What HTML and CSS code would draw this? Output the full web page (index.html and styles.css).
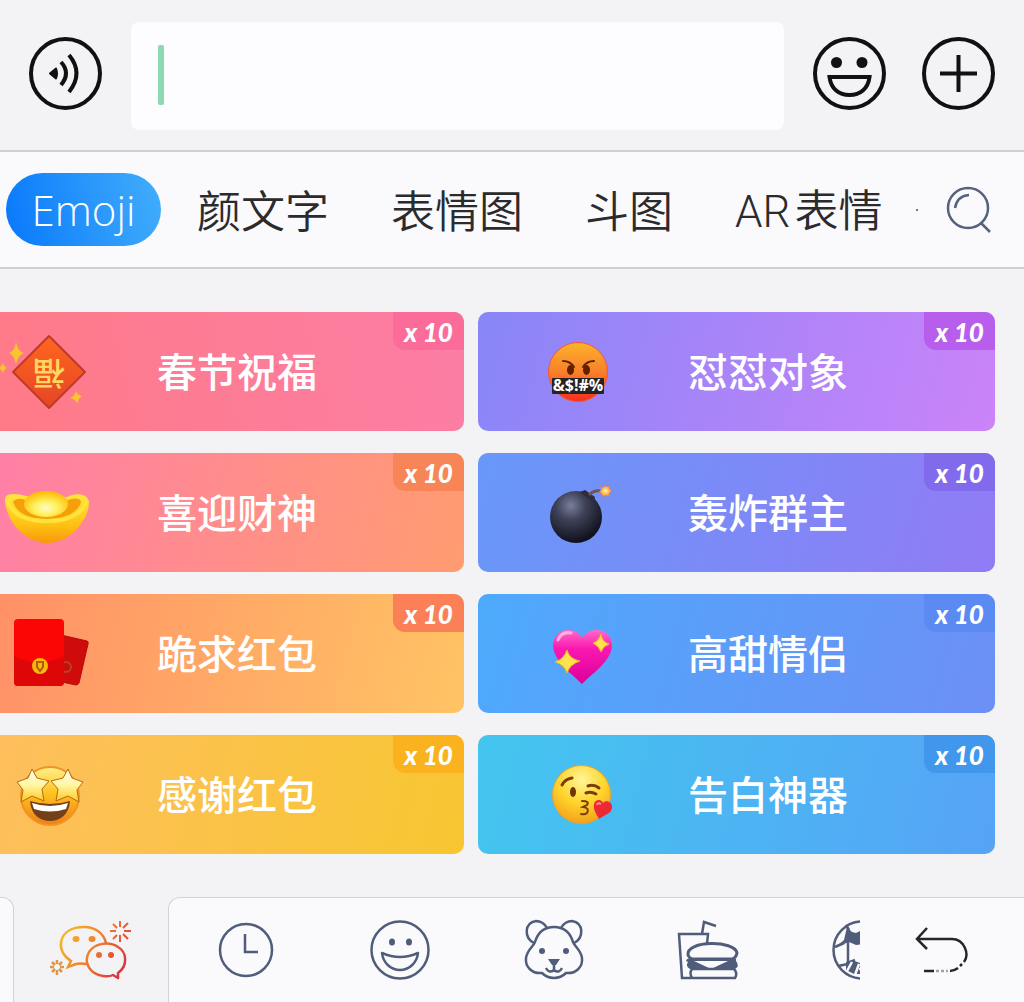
FILE: index.html
```html
<!DOCTYPE html>
<html lang="zh-CN">
<head>
    <meta charset="UTF-8">
    <meta name="viewport" content="width=device-width, initial-scale=1.0">
    <title>Emoji</title>
    <link rel="stylesheet" href="styles.css">
</head>
<body>
    <div class="keyboard">
        <header class="input-bar">
            <button class="round-btn" aria-label="语音">
                <svg viewBox="0 0 73 73" fill="none" stroke="#111" stroke-width="4">
                    <circle cx="36.5" cy="36.5" r="34.5"/>
                    <path d="M21 36.5L27 31.5Q29 36.500 27 41.5Z" fill="#111" stroke-width="2" stroke-linejoin="round"/>
                    <path d="M32 25Q42 36 32 48M40 18Q55 36 40 55"/>
                </svg>
            </button>
            <div class="field">
                <input type="text" class="message" id="message" aria-label="消息">
                <span class="caret"></span>
            </div>
            <div class="actions">
                <button class="round-btn" aria-label="表情">
                    <svg viewBox="0 0 73 73" fill="none" stroke="#111" stroke-width="4">
                        <circle cx="36.5" cy="36.5" r="34.5"/>
                        <circle cx="23.5" cy="25.5" r="5.5" fill="#111" stroke="none"/>
                        <circle cx="49" cy="25.5" r="5.5" fill="#111" stroke="none"/>
                        <path d="M16.5 40H56.5C55 52 47 58 36.5 58S18 52 16.5 40Z"/>
                    </svg>
                </button>
                <button class="round-btn" aria-label="更多">
                    <svg viewBox="0 0 73 73" fill="none" stroke="#111" stroke-width="4">
                        <circle cx="36.5" cy="36.5" r="34.5"/>
                        <path d="M36.5 18V55M18 36.5H55"/>
                    </svg>
                </button>
            </div>
        </header>

        <nav class="tabs">
            <button class="tab active">Emoji</button>
            <button class="tab">颜文字</button>
            <button class="tab">表情图</button>
            <button class="tab">斗图</button>
            <button class="tab"><span class="latin">AR</span>表情</button>
            <span class="more-dot"></span>
            <button class="search" aria-label="搜索">
                <svg viewBox="0 0 46 46" fill="none" stroke="#54617f" stroke-width="2.5">
                    <circle cx="22" cy="21" r="20"/>
                    <path d="M9 21Q11 9 23 8M35 36L44 45"/>
                </svg>
            </button>
        </nav>

        <main class="cards">
            <button class="card spring">
                <svg class="emoji" viewBox="0 0 96 84">
                    <defs>
                        <linearGradient id="fu" x1="0" y1="0" x2="0" y2="1"><stop offset="0" stop-color="#ff661e"/><stop offset="1" stop-color="#e54526"/></linearGradient>
                    </defs>
                    <path d="M48 6L84 42L48 78L12 42Z" fill="url(#fu)" stroke="#c03a2c" stroke-width="2" stroke-linejoin="round"/>
                    <text class="fu" x="48" y="54" text-anchor="middle" transform="rotate(180 48 43)">福</text>
                    <path d="M15 12Q17 22 23 23Q17 25 15 34Q13 25 8 23Q13 22 15 12ZM2 33Q3 37 6 38Q3 39 2 43Q0 39-3 38Q0 37 2 33ZM75 61Q76 65 81 66Q78 68 76 73Q74 69 69 68Q74 66 75 61Z" fill="#f8c62c"/>
                </svg>
                <span class="name">春节祝福</span>
                <span class="count">x 10</span>
            </button>
            <button class="card scold">
                <svg class="emoji" viewBox="0 0 96 84">
                    <defs>
                        <linearGradient id="angry" x1="0" y1="0" x2="0" y2="1"><stop offset="0" stop-color="#fdb22b"/><stop offset=".5" stop-color="#f8802a"/><stop offset="1" stop-color="#f42e20"/></linearGradient>
                    </defs>
                    <circle cx="46" cy="42" r="29.5" fill="url(#angry)" stroke="#f3592d"/>
                    <ellipse cx="38.5" cy="40" rx="3.5" ry="5" fill="#652000"/>
                    <ellipse cx="54.5" cy="40" rx="3.5" ry="5" fill="#652000"/>
                    <path d="M31 31Q38 31 42 37M62 31Q55 31 51 37" fill="none" stroke="#652000" stroke-width="2" stroke-linecap="round"/>
                    <rect x="20" y="48" width="52" height="16" rx="1" fill="#242222"/>
                    <text class="swear" x="46" y="61" text-anchor="middle">&amp;$!#%</text>
                </svg>
                <span class="name">怼怼对象</span>
                <span class="count">x 10</span>
            </button>
            <button class="card wealth">
                <svg class="emoji" viewBox="0 0 96 84">
                    <defs>
                        <linearGradient id="gold" x1="0" y1="0" x2="0" y2="1"><stop offset="0" stop-color="#ffe640"/><stop offset=".6" stop-color="#ffc414"/><stop offset="1" stop-color="#f59a08"/></linearGradient>
                        <radialGradient id="dome" cx=".5" cy=".65" r=".6"><stop offset="0" stop-color="#fffbc8"/><stop offset=".45" stop-color="#fff05c"/><stop offset="1" stop-color="#ffbe0b"/></radialGradient>
                    </defs>
                    <path d="M4 28C5 21 17 23 25 25L66 26C76 21 87 23 88 31C88 46 76 61 63 68Q45 76 30 68C14 61 4 42 4 28Z" fill="url(#gold)"/>
                    <path d="M12 30C19 26 22 28 26 30H65C73 26 80 27 80 31C77 41 65 48 46 48C28 48 15 42 12 30Z" fill="#f5a00a"/>
                    <ellipse cx="45" cy="33" rx="22" ry="13" fill="url(#dome)"/>
                    <path d="M6 29C12 45 26 50 46 50C66 50 80 44 86 30" fill="none" stroke="#ffe43c" stroke-width="4"/>
                </svg>
                <span class="name">喜迎财神</span>
                <span class="count">x 10</span>
            </button>
            <button class="card bomb">
                <svg class="emoji" viewBox="0 0 96 84">
                    <defs>
                        <radialGradient id="ball" cx=".4" cy=".28" r=".7"><stop offset="0" stop-color="#78809a"/><stop offset=".4" stop-color="#3e4257"/><stop offset="1" stop-color="#11121f"/></radialGradient>
                        <radialGradient id="spark"><stop offset="0" stop-color="#fff8a0"/><stop offset=".5" stop-color="#ffb64c"/><stop offset="1" stop-color="#f5533a"/></radialGradient>
                    </defs>
                    <circle cx="44" cy="46" r="26" fill="url(#ball)"/>
                    <path d="M48 21L53 19L63 26L62 32Z" fill="#2e2d3a"/>
                    <path d="M57 24Q62 19 68 20" fill="none" stroke="#6f5552" stroke-width="3"/>
                    <path d="M72 13L74 16L78 14L77 18L81 20L77 22L78 26L74 24L71 27L70 23L66 21L70 19L68 15L72 17Z" fill="url(#spark)"/>
                </svg>
                <span class="name">轰炸群主</span>
                <span class="count">x 10</span>
            </button>
            <button class="card packet">
                <svg class="emoji" viewBox="0 0 96 84">
                    <path d="M60 23L86 29Q88 30 87 32L78 71Q77 73 75 73L56 69Z" fill="#cf0b0b" stroke="#b80c0c"/>
                    <circle cx="65" cy="55" r="5" fill="none" stroke="#b6461b" stroke-width="2"/>
                    <rect x="13" y="7" width="50" height="67" rx="4" fill="#fb0505"/>
                    <path d="M13 44Q38 57 63 44V70Q63 74 59 74H17Q13 74 13 70Z" fill="#dd0707"/>
                    <circle cx="39" cy="54" r="8" fill="#f9b80c"/>
                    <path d="M36 50H42V55L39 59L36 55Z" fill="none" stroke="#b55b08" stroke-width="2"/>
                </svg>
                <span class="name">跪求红包</span>
                <span class="count">x 10</span>
            </button>
            <button class="card couple">
                <svg class="emoji" viewBox="0 0 96 84">
                    <defs>
                        <linearGradient id="love" x1="0" y1="0" x2="0" y2="1"><stop offset="0" stop-color="#ff6ac8"/><stop offset=".35" stop-color="#fb18b1"/><stop offset="1" stop-color="#d80099"/></linearGradient>
                    </defs>
                    <path d="M50 72C38 60 22 49 21 34C21 16 43 13 50 26C58 13 80 16 80 34C79 49 62 60 50 72Z" fill="url(#love)"/>
                    <path d="M26 28Q30 19 39 21" fill="none" stroke="#ffb0e2" stroke-width="3" stroke-linecap="round"/>
                    <path d="M35 38Q37 47 48 49Q38 52 35 61Q33 53 23 50Q32 47 35 38ZM69 22Q70 30 77 32Q71 34 69 40Q67 34 61 31Q67 29 69 22Z" fill="#ffe34c" stroke="#f5b41f"/>
                </svg>
                <span class="name">高甜情侣</span>
                <span class="count">x 10</span>
            </button>
            <button class="card thanks">
                <svg class="emoji" viewBox="0 0 96 84">
                    <defs>
                        <linearGradient id="face" x1="0" y1="0" x2="0" y2="1"><stop offset="0" stop-color="#fff18a"/><stop offset=".45" stop-color="#ffc320"/><stop offset="1" stop-color="#f07d15"/></linearGradient>
                        <linearGradient id="star" x1="0" y1="0" x2="0" y2="1"><stop offset="0" stop-color="#fffef0"/><stop offset=".5" stop-color="#fff6a0"/><stop offset="1" stop-color="#ffc61d"/></linearGradient>
                    </defs>
                    <circle cx="49" cy="43" r="29" fill="url(#face)" stroke="#ef9425" stroke-width="2"/>
                    <path d="M29 48Q49 54 69 48C68 62 59 68 49 68S30 62 29 48Z" fill="#744018"/>
                    <path d="M31 50Q49 56 67 50L65 56Q49 61 33 56Z" fill="#fff"/>
                    <path d="M31 16L36 25L48 28L41 36L43 48L31 43L20 49L22 37L16 29L27 25ZM67 16L71 25L82 29L76 37L78 49L67 43L55 48L57 36L50 28L62 25Z" fill="url(#star)" stroke="#b46a12" stroke-linejoin="round"/>
                </svg>
                <span class="name">感谢红包</span>
                <span class="count">x 10</span>
            </button>
            <button class="card confess">
                <svg class="emoji" viewBox="0 0 96 84">
                    <defs>
                        <radialGradient id="kiss" cx=".5" cy=".25" r=".8"><stop offset="0" stop-color="#fff59a"/><stop offset=".5" stop-color="#ffd52c"/><stop offset="1" stop-color="#f29a18"/></radialGradient>
                    </defs>
                    <circle cx="49.5" cy="41.5" r="29" fill="url(#kiss)" stroke="#eea32b"/>
                    <ellipse cx="41" cy="39" rx="3" ry="5" fill="#6f3708"/>
                    <path d="M30 32Q33 26 40 25M56 33Q62 31 67 35M54 40Q59 38 64 41" fill="none" stroke="#7a3f08" stroke-width="3" stroke-linecap="round"/>
                    <path d="M50 48Q58 48 55 52L51 54Q58 55 55 60Q53 62 49 61" fill="none" stroke="#7a3f08" stroke-width="2" stroke-linecap="round"/>
                    <path d="M67 66C64 60 61 57 62 51C64 45 70 47 71 50C74 46 81 49 80 55C79 61 72 62 67 66Z" fill="#ed2933"/>
                    <path d="M65 52Q66 49 69 51" fill="none" stroke="#ff8d90" stroke-width="2"/>
                </svg>
                <span class="name">告白神器</span>
                <span class="count">x 10</span>
            </button>
        </main>

        <footer class="categories">
            <div class="edge"></div>
            <button class="category current" aria-label="热门">
                <svg class="chat-icon" viewBox="0 0 80 60">
                    <defs>
                        <linearGradient id="warm" gradientUnits="userSpaceOnUse" x1="8" y1="10" x2="72" y2="50"><stop offset="0" stop-color="#f6c224"/><stop offset=".5" stop-color="#ef812b"/><stop offset="1" stop-color="#dd3340"/></linearGradient>
                    </defs>
                    <g stroke="url(#warm)">
                        <path d="M36 44Q28 43 25 44L17 47L20 41C11 35 9 29 10 22C12 12 21 7 33 7C45 7 53 14 55 23"/>
                        <path d="M67 53C77 46 76 32 67 27C58 21 44 23 38 32C32 43 39 54 52 56Q58 57 62 55L67 58Z" stroke-linejoin="round"/>
                        <path d="M69 1V7M69 15V22M59 11H65M73 11H80M62 4L66 8M72 14L77 19M62 19L66 15M72 8L77 3" stroke-width="2"/>
                    </g>
                    <path d="M6 40V44M6 50V55M-1 47H3M9 47H13M1 42L4 45M8 49L11 52M1 52L4 49M8 45L11 42" stroke="#dc9748"/>
                    <g fill="url(#warm)" stroke="none"><ellipse cx="25" cy="19" rx="3.5" ry="3"/><ellipse cx="41" cy="19" rx="3.5" ry="3"/><circle cx="48" cy="35" r="3"/><circle cx="60" cy="35" r="3"/></g>
                </svg>
            </button>
            <div class="panel">
                <div class="category-list">
                    <button class="category" aria-label="最近">
                        <svg viewBox="0 0 60 60"><circle cx="30" cy="30" r="26"/><path d="M29 14V32H42"/></svg>
                    </button>
                    <button class="category" aria-label="笑脸">
                        <svg viewBox="0 0 60 60">
                            <circle cx="30" cy="30" r="28.5"/>
                            <g class="solid"><ellipse cx="22" cy="22" rx="3" ry="3.5"/><ellipse cx="39" cy="22" rx="3" ry="3.5"/></g>
                            <path d="M12 33Q30 41 48 33C47 43 39 50 30 50S13 43 12 33Z" stroke-linejoin="round"/>
                        </svg>
                    </button>
                    <button class="category" aria-label="动物">
                        <svg viewBox="0 0 60 60">
                            <path d="M18 53C8 54 1 47 2 38C3 30 9 27 11 22C14 12 21 7 30 7S46 12 49 22C51 27 57 30 58 38C59 47 52 54 42 53Q37 58 30 58T18 53Z"/>
                            <path d="M10 23C0 18 0 3 12 1Q19 1 23 8M50 23C60 18 60 3 48 1Q41 1 37 8"/>
                            <g class="solid"><circle cx="18" cy="31" r="3"/><circle cx="42" cy="31" r="3"/><path d="M24 39H36L32 45H28Z"/></g>
                            <path d="M30 43V50M22 48Q25 54 30 50Q35 54 38 48"/>
                        </svg>
                    </button>
                    <button class="category" aria-label="食物">
                        <svg viewBox="0 0 60 60">
                            <path d="M13 58H4L1 14H30L29 24M24 14L26 2L38 6"/>
                            <path d="M10 35C8 20 57 20 59 33Q58 38 54 39H14Q11 38 10 35Z" stroke-width="3"/>
                            <path class="solid" d="M9 39H58V41Q62 46 57 49H12Q7 46 10 42L8 41Z"/>
                            <path d="M16 41H50L33 49Z" fill="#faf9fc" stroke="none"/>
                            <path d="M14 49H56Q60 53 57 58H14Q11 53 14 49Z"/>
                        </svg>
                    </button>
                    <button class="category" aria-label="运动">
                        <svg viewBox="0 0 60 60">
                            <circle cx="30" cy="30" r="28.5"/>
                            <path d="M3 27L12 23M17 10L14 5M16 22V44L6 46M16 43L23 40M52 24L46 16M44 43V28"/>
                            <path class="solid" d="M15 7L20 12L24 13L30 10L28 17L31 24L24 25L17 22L4 27L12 20ZM14 42L20 40L31 44V54L22 54L14 50Z"/>
                            <path d="M20 42L15 51M27 44L23 55M27 49H32" stroke="#faf9fc"/>
                        </svg>
                    </button>
                </div>
                <button class="undo" aria-label="撤销">
                    <svg viewBox="0 0 54 48" fill="none" stroke="#262626" stroke-width="2.5">
                        <path d="M12 2L2 13L12 23M2 13H37C49 13 55 28 49 36M47 38L45 40M43 42Q39 45 35 45M9 45H19"/>
                        <path d="M21 45H33" stroke="#a2a2a5" stroke-dasharray="3 2"/>
                    </svg>
                </button>
            </div>
        </footer>
    </div>
</body>
</html>
```
FILE: styles.css
```css
* {
    box-sizing: border-box;
}

body {
    margin: 0;
    background: #f3f2f5;
    color: #2b2b2d;
    font-family: "Noto Sans CJK SC", sans-serif;
}

button {
    border: none;
    background: none;
    padding: 0;
    color: inherit;
    font: inherit;
    cursor: pointer;
}

svg {
    display: block;
    overflow: visible;
}

.keyboard {
    display: flex;
    flex-direction: column;
    min-height: 100vh;
    overflow: hidden;
}

/* message input */
.input-bar {
    display: flex;
    align-items: flex-start;
    gap: 29px;
    padding: 22px 29px 20px;
    border-bottom: 2px solid #cfced1;
}

.round-btn {
    width: 73px;
    height: 73px;
    flex: none;
    margin-top: 15px;
}

.field {
    position: relative;
    flex: 1;
}

.message {
    display: block;
    width: 100%;
    height: 108px;
    border: none;
    border-radius: 8px;
    background: #fdfcfe;
    padding: 0 28px;
    font-size: 40px;
    outline: none;
}

.caret {
    position: absolute;
    left: 27px;
    top: 23px;
    width: 6px;
    height: 60px;
    border-radius: 2px;
    background: #8fd9b2;
}

.actions {
    display: flex;
    gap: 36px;
}

/* tabs */
.tabs {
    display: flex;
    align-items: center;
    height: 117px;
    padding: 0 32px 0 6px;
    background: #faf9fc;
    border-bottom: 2px solid #d0cfd2;
}

.tab {
    height: 73px;
    padding: 0 31px;
    font-size: 44px;
    font-weight: 350;
    line-height: 71px;
    white-space: nowrap;
}

.tab.active {
    width: 155px;
    margin-right: 5px;
    padding: 0;
    border-radius: 37px;
    background: linear-gradient(75deg, #0878fb, #42aefc);
    color: #fff;
    font-family: "Open Sans", "Noto Sans", sans-serif;
    font-size: 42px;
    line-height: 73px;
}

.latin {
    margin-right: 4px;
    font-family: Roboto, sans-serif;
}

.more-dot {
    width: 2px;
    height: 2px;
    margin-left: 3px;
    background: #77777c;
}

.search {
    width: 46px;
    height: 46px;
    margin-left: auto;
}

/* cards, the left column runs off the edge */
.cards {
    display: grid;
    grid-template-columns: 1fr 1fr;
    gap: 22px 14px;
    margin-left: -53px;
    padding: 43px 29px 43px 0;
}

.card {
    position: relative;
    display: flex;
    align-items: center;
    gap: 60px;
    height: 119px;
    padding-left: 54px;
    border-radius: 10px;
    overflow: hidden;
    color: #fff;
}

.emoji {
    width: 96px;
    height: 84px;
}

.name {
    padding-bottom: 4px;
    font-size: 40px;
    font-weight: 500;
    line-height: 60px;
    white-space: nowrap;
}

.count {
    position: absolute;
    top: 0;
    right: 0;
    width: 71px;
    height: 38px;
    border-bottom-left-radius: 12px;
    font-family: Lato, sans-serif;
    font-size: 26px;
    font-style: italic;
    font-weight: 900;
    line-height: 40px;
}

.fu {
    fill: #ffd75e;
    font-size: 32px;
    font-weight: 500;
}

.swear {
    fill: #fff;
    font-family: "Open Sans", sans-serif;
    font-size: 16px;
    font-weight: 700;
}

.spring { background: linear-gradient(75deg, #ff7a84, #fc7ea5); }
.spring .count { background: #fb6c9a; }
.scold { background: linear-gradient(105deg, #8886f8, #cb83f9); }
.scold .count { background: #b75fec; }
.wealth { background: linear-gradient(105deg, #ff7cac, #ff9c70); }
.wealth .count { background: #f88557; }
.bomb { background: linear-gradient(105deg, #6898fa, #917bf5); }
.bomb .count { background: #826aed; }
.packet { background: linear-gradient(105deg, #ff8b68, #ffc464); }
.packet .count { background: #fb8058; }
.couple { background: linear-gradient(105deg, #4daafc, #6d8ff6); }
.couple .count { background: #5b8af3; }
.thanks { background: linear-gradient(105deg, #ffbe62, #f7c631); }
.thanks .count { background: #fab31e; }
.confess { background: linear-gradient(105deg, #43c6ef, #56a3f6); }
.confess .count { background: #4097eb; }

/* bottom categories */
.categories {
    display: flex;
    flex: 1;
    min-height: 105px;
}

.edge {
    width: 14px;
    border: solid #d2d1d5;
    border-width: 1px 1px 0 0;
    border-top-right-radius: 12px;
    background: #faf9fc;
}

.category {
    width: 154px;
    flex: none;
    display: flex;
    justify-content: center;
    align-items: center;
}

.category svg {
    width: 60px;
    height: 60px;
    fill: none;
    stroke: #505d7a;
    stroke-width: 2.5;
}

.category .chat-icon {
    width: 80px;
}

.category .solid {
    fill: #505d7a;
    stroke: none;
}

.panel {
    display: flex;
    flex: 1;
    min-width: 0;
    border: solid #d2d1d5;
    border-width: 1px 0 0 1px;
    border-top-left-radius: 12px;
    background: #faf9fc;
}

.category-list {
    display: flex;
    flex: 1;
    min-width: 0;
    overflow: hidden;
}

.undo {
    width: 164px;
    display: flex;
    justify-content: center;
    align-items: center;
}

.undo svg {
    width: 54px;
    height: 48px;
}
```
